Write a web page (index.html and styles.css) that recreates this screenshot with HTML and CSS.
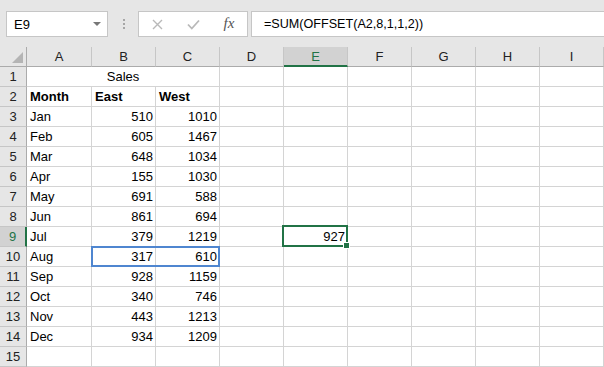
FILE: index.html
```html
<!DOCTYPE html>
<html lang="en">
  <head>
    <meta charset="UTF-8" />
    <title>OFFSET</title>
    <link rel="stylesheet" href="styles.css">
  </head>
  <body>
    <div class="bar">
      <div class="namebox">
        <span>E9</span>
        <span class="namebox__arrow"></span>
      </div>
      <div class="grip"><i></i><i></i><i></i></div>
      <div class="fxbox">
        <span class="fxbox__btn">
          <svg width="11" height="11" viewBox="0 0 11 11"><path d="M1 1 L10 10 M10 1 L1 10" stroke="#b9b9b9" stroke-width="1.4" fill="none" /></svg>
        </span>
        <span class="fxbox__btn">
          <svg width="13" height="11" viewBox="0 0 13 11"><path d="M1 5.5 L4.8 9.5 L12 1.5" stroke="#b9b9b9" stroke-width="1.8" fill="none" /></svg>
        </span>
        <span class="fxbox__btn fxbox__fx">fx</span>
      </div>
      <div class="formula">=SUM(OFFSET(A2,8,1,1,2))</div>
    </div>

    <div class="sheet">
      <div class="corner"><span class="corner__tri"></span></div>
      <div class="ch">A</div>
      <div class="ch">B</div>
      <div class="ch">C</div>
      <div class="ch">D</div>
      <div class="ch ch--sel">E</div>
      <div class="ch">F</div>
      <div class="ch">G</div>
      <div class="ch">H</div>
      <div class="ch">I</div>

      <div class="rh">1</div>
      <div class="c c--merge">Sales</div>
      <div class="c"></div><div class="c"></div><div class="c"></div><div class="c"></div><div class="c"></div><div class="c"></div>

      <div class="rh">2</div>
      <div class="c c--bold">Month</div>
      <div class="c c--bold">East</div>
      <div class="c c--bold">West</div>
      <div class="c"></div><div class="c"></div><div class="c"></div><div class="c"></div><div class="c"></div><div class="c"></div>

      <div class="rh">3</div>
      <div class="c">Jan</div><div class="c num">510</div><div class="c num">1010</div>
      <div class="c"></div><div class="c"></div><div class="c"></div><div class="c"></div><div class="c"></div><div class="c"></div>

      <div class="rh">4</div>
      <div class="c">Feb</div><div class="c num">605</div><div class="c num">1467</div>
      <div class="c"></div><div class="c"></div><div class="c"></div><div class="c"></div><div class="c"></div><div class="c"></div>

      <div class="rh">5</div>
      <div class="c">Mar</div><div class="c num">648</div><div class="c num">1034</div>
      <div class="c"></div><div class="c"></div><div class="c"></div><div class="c"></div><div class="c"></div><div class="c"></div>

      <div class="rh">6</div>
      <div class="c">Apr</div><div class="c num">155</div><div class="c num">1030</div>
      <div class="c"></div><div class="c"></div><div class="c"></div><div class="c"></div><div class="c"></div><div class="c"></div>

      <div class="rh">7</div>
      <div class="c">May</div><div class="c num">691</div><div class="c num">588</div>
      <div class="c"></div><div class="c"></div><div class="c"></div><div class="c"></div><div class="c"></div><div class="c"></div>

      <div class="rh">8</div>
      <div class="c">Jun</div><div class="c num">861</div><div class="c num">694</div>
      <div class="c"></div><div class="c"></div><div class="c"></div><div class="c"></div><div class="c"></div><div class="c"></div>

      <div class="rh rh--sel">9</div>
      <div class="c">Jul</div><div class="c num">379</div><div class="c num">1219</div>
      <div class="c"></div>
      <div class="c num c--active">927<span class="active"><span class="active__handle"></span></span></div>
      <div class="c"></div><div class="c"></div><div class="c"></div><div class="c"></div>

      <div class="rh">10</div>
      <div class="c">Aug</div>
      <div class="c num c--ref">317<span class="ref"></span></div>
      <div class="c num">610</div>
      <div class="c"></div><div class="c"></div><div class="c"></div><div class="c"></div><div class="c"></div><div class="c"></div>

      <div class="rh">11</div>
      <div class="c">Sep</div><div class="c num">928</div><div class="c num">1159</div>
      <div class="c"></div><div class="c"></div><div class="c"></div><div class="c"></div><div class="c"></div><div class="c"></div>

      <div class="rh">12</div>
      <div class="c">Oct</div><div class="c num">340</div><div class="c num">746</div>
      <div class="c"></div><div class="c"></div><div class="c"></div><div class="c"></div><div class="c"></div><div class="c"></div>

      <div class="rh">13</div>
      <div class="c">Nov</div><div class="c num">443</div><div class="c num">1213</div>
      <div class="c"></div><div class="c"></div><div class="c"></div><div class="c"></div><div class="c"></div><div class="c"></div>

      <div class="rh">14</div>
      <div class="c">Dec</div><div class="c num">934</div><div class="c num">1209</div>
      <div class="c"></div><div class="c"></div><div class="c"></div><div class="c"></div><div class="c"></div><div class="c"></div>

      <div class="rh">15</div>
      <div class="c"></div><div class="c"></div><div class="c"></div>
      <div class="c"></div><div class="c"></div><div class="c"></div><div class="c"></div><div class="c"></div><div class="c"></div>
    </div>
  </body>
</html>
```

FILE: styles.css
```css
* {
  box-sizing: border-box;
}
html,
body {
  margin: 0;
  width: 604px;
  height: 367px;
  overflow: hidden;
  background-color: #fff;
  font-family: "Liberation Sans", Arial, sans-serif;
  font-size: 13px;
  color: #000;
}

/* formula bar */
.bar {
  display: flex;
  align-items: flex-start;
  height: 47px;
  padding-top: 11px;
  background-color: #e6e6e6;
}
.namebox {
  display: flex;
  align-items: center;
  justify-content: space-between;
  width: 102px;
  height: 26px;
  margin-left: 6px;
  padding: 0 6px 0 7px;
  border: 1px solid #c6c6c6;
  background-color: #fff;
}
.namebox__arrow {
  width: 0;
  height: 0;
  border-left: 4px solid transparent;
  border-right: 4px solid transparent;
  border-top: 4px solid #777;
}
.grip {
  display: flex;
  flex-direction: column;
  gap: 2px;
  margin: 8px 0 0 15px;
}
.grip i {
  display: block;
  width: 2px;
  height: 2px;
  background-color: #a6a6a6;
}
.fxbox {
  display: flex;
  width: 110px;
  height: 26px;
  margin-left: 13px;
  border: 1px solid #c6c6c6;
  background-color: #fff;
}
.fxbox__btn {
  display: flex;
  justify-content: center;
  align-items: center;
  width: 36px;
}
.fxbox__fx {
  font-family: "Liberation Serif", serif;
  font-style: italic;
  font-size: 15px;
  color: #555;
  padding-bottom: 2px;
}
.formula {
  flex: 1 1 auto;
  height: 26px;
  margin-left: 3px;
  padding-left: 12px;
  border: 1px solid #c6c6c6;
  border-right: none;
  background-color: #fff;
  font-size: 12.6px;
  line-height: 24px;
}

/* grid */
.sheet {
  display: grid;
  grid-template-columns: 27px 65px repeat(8, 64px);
  grid-auto-rows: 20px;
}
.corner {
  position: relative;
  background-color: #e6e6e6;
  border-right: 1px solid #ababab;
  border-bottom: 1px solid #ababab;
}
.corner__tri {
  position: absolute;
  right: 3px;
  bottom: 3px;
  width: 0;
  height: 0;
  border-left: 11px solid transparent;
  border-bottom: 11px solid #b4b4b4;
}
.ch,
.rh {
  background-color: #e6e6e6;
  color: #222;
  text-align: center;
  line-height: 18px;
  padding-top: 1px;
}
.ch {
  border-right: 1px solid #c6c6c6;
  border-bottom: 1px solid #ababab;
}
.ch--sel {
  background-color: #d2d2d2;
  color: #217346;
  border-bottom: 2px solid #217346;
}
.rh {
  border-right: 1px solid #ababab;
  border-bottom: 1px solid #c6c6c6;
}
.rh--sel {
  background-color: #d2d2d2;
  color: #217346;
  border-right: 2px solid #217346;
}
.c {
  border-right: 1px solid #d4d4d4;
  border-bottom: 1px solid #d4d4d4;
  padding: 1px 3px 0;
  line-height: 18px;
  white-space: nowrap;
}
.c--merge {
  grid-column: span 3;
  text-align: center;
}
.c--bold {
  font-weight: 700;
}
.num {
  text-align: right;
  padding-right: 2px;
}
.c--active,
.c--ref {
  position: relative;
}
.active {
  position: absolute;
  top: -2px;
  left: -2px;
  right: -1px;
  bottom: -1px;
  border: 2px solid #217346;
}
.active__handle {
  position: absolute;
  right: -4px;
  bottom: -4px;
  width: 7px;
  height: 7px;
  background-color: #217346;
  border: 1px solid #fff;
}
.ref {
  position: absolute;
  top: -1px;
  left: -1px;
  width: 129px;
  height: 21px;
  border: 2px solid #4f86d0;
}
```
